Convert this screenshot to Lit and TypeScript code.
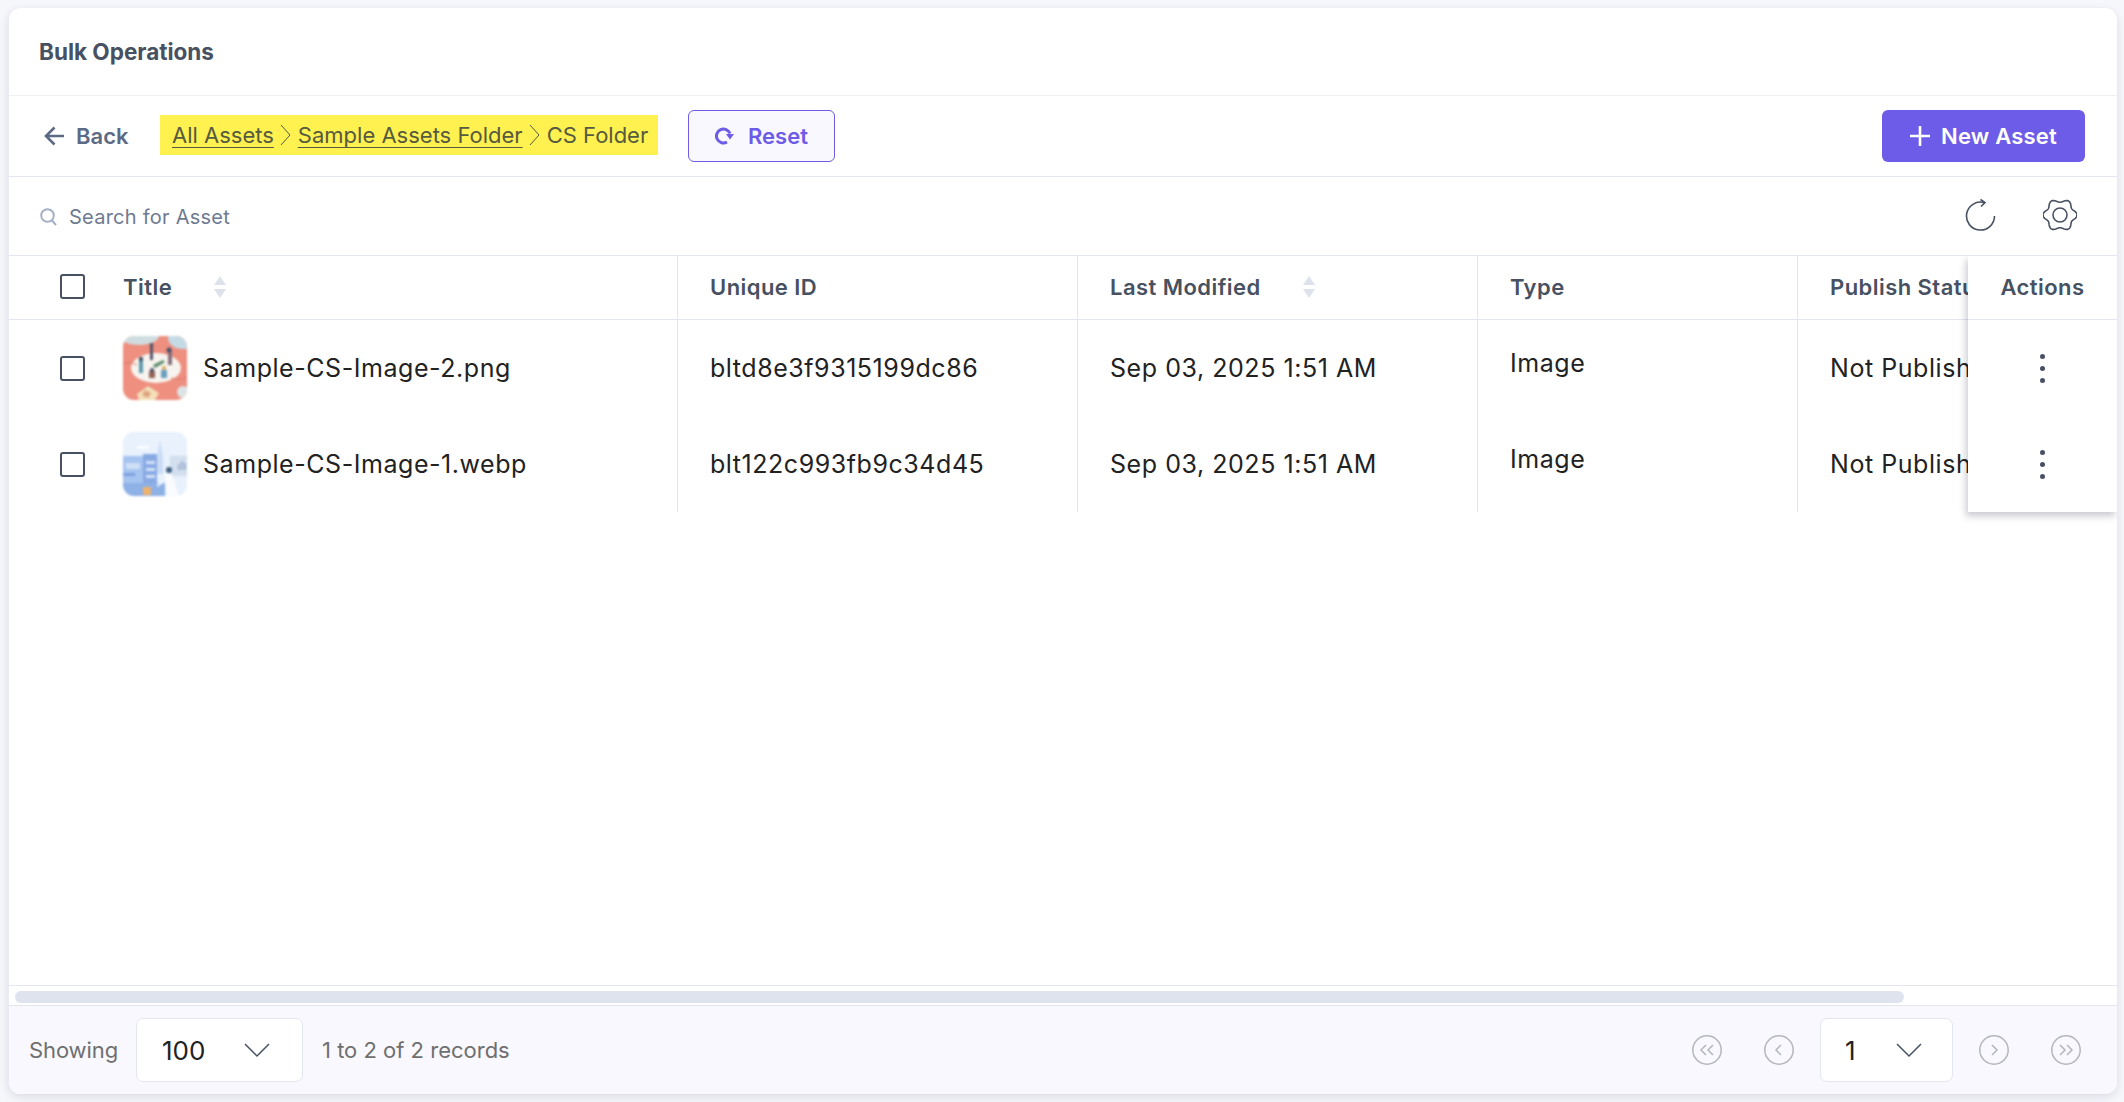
import { LitElement, html, css, svg } from "lit";
import { customElement } from "lit/decorators.js";

const gearPath = (() => {
  const pts: string[] = [];
  for (let i = 0; i < 180; i++) {
    const t = (i / 180) * Math.PI * 2;
    const r = 14.4 + 1.7 * Math.cos(6 * t);
    pts.push(`${(17 + r * 1.06 * Math.cos(t)).toFixed(2)} ${(16 + r * Math.sin(t)).toFixed(2)}`);
  }
  return "M" + pts.join("L") + "Z";
})();

const rows = [
  { name: "Sample-CS-Image-2.png", id: "bltd8e3f9315199dc86", thumb: 0 },
  { name: "Sample-CS-Image-1.webp", id: "blt122c993fb9c34d45", thumb: 1 },
];

const thumbA = svg`
  <rect width="64" height="64" fill="#ee8f7f"/>
  <ellipse cx="16" cy="0" rx="20" ry="9" fill="#cfdde0"/>
  <ellipse cx="60" cy="2" rx="15" ry="11" fill="#c4dbe6"/>
  <ellipse cx="33" cy="32" rx="25" ry="15" fill="#f7f3ee"/>
  <rect x="27" y="9" width="3" height="15" fill="#55566a"/>
  <circle cx="28.500" cy="9" r="2" fill="#55566a"/>
  <rect x="45" y="14" width="4" height="15" fill="#86707a"/>
  <circle cx="46" cy="14" r="2.500" fill="#4a5068"/>
  <rect x="16" y="24" width="4" height="13" fill="#5e9aac"/>
  <circle cx="18" cy="23" r="2.200" fill="#4a5068"/>
  <path d="M30 29l10-5 2 2-10 6z" fill="#5c8a6c"/>
  <rect x="26" y="35" width="6" height="7" fill="#94645a"/>
  <circle cx="29" cy="34" r="2" fill="#4a5068"/>
  <rect x="38" y="34" width="6" height="8" fill="#6a9fc2"/>
  <circle cx="41" cy="32" r="2" fill="#d8a84e"/>
  <path d="M14 58l11-8 11 7-4 7H16z" fill="#f3dfb8"/>
  <path d="M22 54l6 3-3 5-6-3z" fill="#dca580"/>
  <circle cx="60" cy="56" r="6" fill="#dde4e6"/>
  <path d="M0 28q8-3 14 1M48 42q8 3 16-1" stroke="#d97a6c" stroke-width="1" fill="none"/>
`;

const thumbB = svg`
  <rect width="64" height="64" fill="#e8f1fc"/>
  <path d="M34 26l3-18 3 18v16h-6z" fill="#cadcf5"/>
  <rect x="14" y="14" width="12" height="2.500" fill="#fff"/>
  <rect x="0" y="24" width="20" height="27" fill="#a6c4f0"/>
  <rect x="20" y="22" width="14" height="29" fill="#88a9e4"/>
  <rect x="3" y="31" width="14" height="6" fill="#cfe0f7"/>
  <rect x="0" y="41" width="12" height="3" fill="#7ea0de"/>
  <rect x="23" y="29" width="9" height="3" fill="#d4e3f8"/>
  <rect x="23" y="36" width="9" height="3" fill="#d4e3f8"/>
  <rect x="23" y="43" width="9" height="3" fill="#d4e3f8"/>
  <rect x="47" y="24" width="17" height="20" fill="#d3dfee"/>
  <path d="M56 38v-6M59 38v-9M62 38v-7" stroke="#8fa4c4" stroke-width="1.500"/>
  <rect x="0" y="51" width="42" height="13" fill="#8eb1e6"/>
  <rect x="20" y="55" width="8" height="8" fill="#eeb26b"/>
  <circle cx="46" cy="38" r="3" fill="#3f5f80"/>
  <path d="M41 42l8 0 7 22H44z" fill="#f9fbfe"/>
  <path d="M40 50l-6 4" stroke="#f9fbfe" stroke-width="2"/>
`;

@customElement("app-root")
export class AppRoot extends LitElement {
  static styles = css`
    :host {
      display: block;
      height: 1102px;
      box-sizing: border-box;
      padding: 8px 7px 8px 8px;
      background: #f6f7fb;
      font-family: Inter, "Noto Sans", sans-serif;
      color: #222;
    }
    * { box-sizing: border-box; }
    .card {
      height: 100%;
      display: flex;
      flex-direction: column;
      background: #fff;
      border-radius: 12px;
      border-left: 1px solid #e9ebf3;
      overflow: hidden;
      box-shadow: 0 3px 10px rgba(34, 34, 60, 0.12);
    }
    .title {
      height: 88px;
      flex: none;
      display: flex;
      align-items: center;
      padding-left: 30px;
      padding-bottom: 1px;
      border-bottom: 1px solid #eef0f5;
      font-size: 22.5px;
      font-weight: 700;
      color: #475161;
    }
    .toolbar {
      height: 81px;
      flex: none;
      display: flex;
      align-items: center;
      padding: 0 32px 0 35px;
      border-bottom: 1px solid #e3e6f0;
    }
    .back {
      display: flex;
      align-items: center;
      gap: 12px;
      width: 116px;
      font-size: 22px;
      font-weight: 600;
      color: #5d6a85;
    }
    .crumbs {
      height: 40px;
      width: 498px;
      margin-top: -2px;
      display: flex;
      align-items: center;
      gap: 6.5px;
      padding-left: 12px;
      background: #fff14f;
      font-size: 22px;
      color: #565a40;
      white-space: nowrap;
    }
    .crumbs u { text-underline-offset: 4px; text-decoration-thickness: 1px; }
    .reset {
      margin-left: 30px;
      width: 147px;
      height: 52px;
      display: flex;
      align-items: center;
      justify-content: center;
      gap: 13px;
      border: 1px solid #6c5ce7;
      border-radius: 6px;
      background: #f9f8ff;
      color: #6c5ce7;
      font-size: 22px;
      font-weight: 600;
    }
    .new {
      margin-left: auto;
      width: 203px;
      height: 52px;
      display: flex;
      align-items: center;
      justify-content: center;
      gap: 11px;
      border-radius: 6px;
      background: #6c5ce7;
      color: #fff;
      font-size: 22px;
      font-weight: 600;
      letter-spacing: 0.2px;
    }
    .search {
      height: 79px;
      flex: none;
      display: flex;
      align-items: center;
      padding: 2px 40px 0 31px;
      border-bottom: 1px solid #e3e6f0;
      font-size: 20px;
      letter-spacing: 0.25px;
      color: #6e7a91;
    }
    .search .label { margin-left: 12px; }
    .search .tools { margin-left: auto; display: flex; gap: 47px; align-items: center; margin-top: -5px; }
    .search svg { display: block; }
    .tablewrap {
      position: relative;
      flex: 1;
      min-height: 0;
      overflow: hidden;
      border-bottom: 1px solid #e3e6f0;
    }
    .table {
      display: grid;
      grid-template-columns: 669px 400px 400px 320px 400px;
      grid-template-rows: 64px 96px 96px;
      width: 2189px;
    }
    .table .h {
      display: flex;
      align-items: center;
      padding: 0 0 2px 32px;
      border-bottom: 1px solid #e3e6f0;
      border-right: 1px solid #e3e6f0;
      font-size: 22px;
      font-weight: 600;
      letter-spacing: 0.45px;
      color: #475161;
    }
    .c {
      display: flex;
      align-items: center;
      padding-left: 32px;
      border-right: 1px solid #e3e6f0;
      font-size: 25px;
      letter-spacing: 0.55px;
      white-space: nowrap;
      color: #222;
    }
    .c.up { padding-bottom: 10px; }
    .table .first { padding-left: 51px; }
    .box {
      width: 25px;
      height: 25px;
      flex: none;
      border: 2px solid #475161;
      border-radius: 3px;
    }
    .h .tt { margin-left: 38px; width: 90px; }
    .h .lm { width: 192px; }
    .sort { display: block; }
    .thumb {
      width: 64px;
      height: 64px;
      margin-left: 38px;
      border-radius: 11px;
      overflow: hidden;
      flex: none;
      filter: blur(0.8px);
      display: block;
    }
    .name { margin-left: 16px; }
    .actions {
      position: absolute;
      right: 0;
      top: 0;
      width: 149px;
      height: 256px;
      background: #fff;
      box-shadow: -2px 4px 7px rgba(40, 44, 70, 0.25);
      display: flex;
      flex-direction: column;
    }
    .actions .ah {
      height: 64px;
      display: flex;
      align-items: center;
      justify-content: center;
      padding-bottom: 2px;
      border-bottom: 1px solid #e3e6f0;
      font-size: 22px;
      font-weight: 600;
      letter-spacing: 0.45px;
      color: #475161;
    }
    .actions .ar {
      height: 96px;
      display: flex;
      flex-direction: column;
      gap: 7px;
      align-items: center;
      justify-content: center;
    }
    .dot { width: 5px; height: 5px; border-radius: 50%; background: #475161; }
    .scroll {
      height: 20px;
      flex: none;
      padding: 5px 0 0 6px;
      border-bottom: 1px solid #e3e6f0;
    }
    .thumbbar { width: 1889px; height: 12px; border-radius: 6px; background: #dfe3ee; }
    .footer {
      height: 88px;
      flex: none;
      display: flex;
      align-items: center;
      padding: 0 36px 0 20px;
      background: #f8f8fe;
      font-size: 22px;
      color: #6f6f6f;
    }
    .showing { width: 88px; letter-spacing: -0.1px; }
    .select {
      display: flex;
      align-items: center;
      height: 64px;
      background: #fff;
      border: 1px solid #e3e6f0;
      border-radius: 7px;
      color: #222;
      font-size: 26px;
      flex: none;
    }
    .s100 { width: 167px; margin: 0 19px 0 19px; padding-left: 25px; gap: 39px; }
    .s1 { width: 133px; margin: 0 -16px; padding-left: 24px; gap: 40px; }
    .pager { margin-left: auto; display: flex; align-items: center; gap: 42px; }
    .pager svg { display: block; }
  `;

  private circ(kind: string) {
    const paths: Record<string, string> = {
      first: "M14 10l-5 5 5 5M21 10l-5 5 5 5",
      prev: "M17 10l-5 5 5 5",
      next: "M13 10l5 5-5 5",
      last: "M9 10l5 5-5 5M16 10l5 5-5 5",
    };
    return html`<svg width="30" height="30" viewBox="0 0 30 30" fill="none" stroke="#b4b6bd" stroke-width="1.5">
      <circle cx="15" cy="15" r="14.2"></circle><path d=${paths[kind]}></path></svg>`;
  }

  private sortIcon() {
    return html`<svg class="sort" width="14" height="22" viewBox="0 0 14 22" fill="#dde2ed">
      <path d="M7 0l6 9H1zM7 22l6-9H1z"></path></svg>`;
  }

  render() {
    const thumb = (i: number) => html`<svg class="thumb" viewBox="0 0 64 64">${i ? thumbB : thumbA}</svg>`;
    const chev = () => html`<svg width="26" height="16" viewBox="0 0 26 16" fill="none" stroke="#475161" stroke-width="1.5"><path d="M1 2l12 12L25 2"></path></svg>`;
    const crumbSep = html`<svg width="11" height="24" viewBox="0 0 11 24" fill="none" stroke="#565a40" stroke-width="1"><path d="M1 2l9 10-9 10"></path></svg>`;
    return html`
      <div class="card">
        <div class="title">Bulk Operations</div>
        <div class="toolbar">
          <div class="back">
            <svg width="20" height="20" viewBox="0 0 20 20" fill="none" stroke="#5d6a85" stroke-width="2.600"><path d="M20 10H3M10.500 1.500L2 10l8.500 8.500"></path></svg>
            Back
          </div>
          <div class="crumbs"><u>All Assets</u>${crumbSep}<u>Sample Assets Folder</u>${crumbSep}CS Folder</div>
          <div class="reset">
            <svg width="20" height="18" viewBox="0 0 20 18" fill="none" stroke="#6c5ce7" stroke-width="3"><path d="M12 15A7 7 0 1 1 15 6.500"></path><path d="M11 7h8l-4 5.500z" fill="#6c5ce7" stroke="none"></path></svg>
            Reset
          </div>
          <div class="new">
            <svg width="20" height="20" viewBox="0 0 20 20" stroke="#fff" stroke-width="2.600"><path d="M10 0v20M0 10h20"></path></svg>
            New Asset
          </div>
        </div>
        <div class="search">
          <svg width="17" height="18" viewBox="0 0 17 18" fill="none" stroke="#a6b0c4" stroke-width="2"><circle cx="7.500" cy="7.500" r="6.300"></circle><path d="M12 12.500l4 4.500"></path></svg>
          <span class="label">Search for Asset</span>
          <div class="tools">
            <svg width="31" height="33" viewBox="0 0 31 33" fill="none" stroke="#475161" stroke-width="1.600"><path d="M29.500 18A14 14 0 1 1 19 4.500"></path><path d="M15.500 1.500L20 4.500 16 8.500"></path></svg>
            <svg width="34" height="32" viewBox="0 0 34 32" fill="none" stroke="#475161" stroke-width="1.600"><path d=${gearPath}></path><circle cx="17" cy="16" r="7"></circle></svg>
          </div>
        </div>
        <div class="tablewrap">
          <div class="table">
            <div class="h first"><span class="box"></span><span class="tt">Title</span>${this.sortIcon()}</div>
            <div class="h">Unique ID</div>
            <div class="h"><span class="lm">Last Modified</span>${this.sortIcon()}</div>
            <div class="h">Type</div>
            <div class="h">Publish Status</div>
            ${rows.map(
              (r) => html`
                <div class="c first"><span class="box"></span>${thumb(r.thumb)}<span class="name">${r.name}</span></div>
                <div class="c">${r.id}</div>
                <div class="c">Sep 03, 2025 1:51 AM</div>
                <div class="c up">Image</div>
                <div class="c">Not Published</div>
              `
            )}
          </div>
          <div class="actions">
            <div class="ah">Actions</div>
            ${rows.map(() => html`<div class="ar"><span class="dot"></span><span class="dot"></span><span class="dot"></span></div>`)}
          </div>
        </div>
        <div class="scroll"><div class="thumbbar"></div></div>
        <div class="footer">
          <span class="showing">Showing</span>
          <div class="select s100">100 ${chev()}</div>
          <span>1 to 2 of 2 records</span>
          <div class="pager">
            ${this.circ("first")} ${this.circ("prev")}
            <div class="select s1">1 ${chev()}</div>
            ${this.circ("next")} ${this.circ("last")}
          </div>
        </div>
      </div>
    `;
  }
}
